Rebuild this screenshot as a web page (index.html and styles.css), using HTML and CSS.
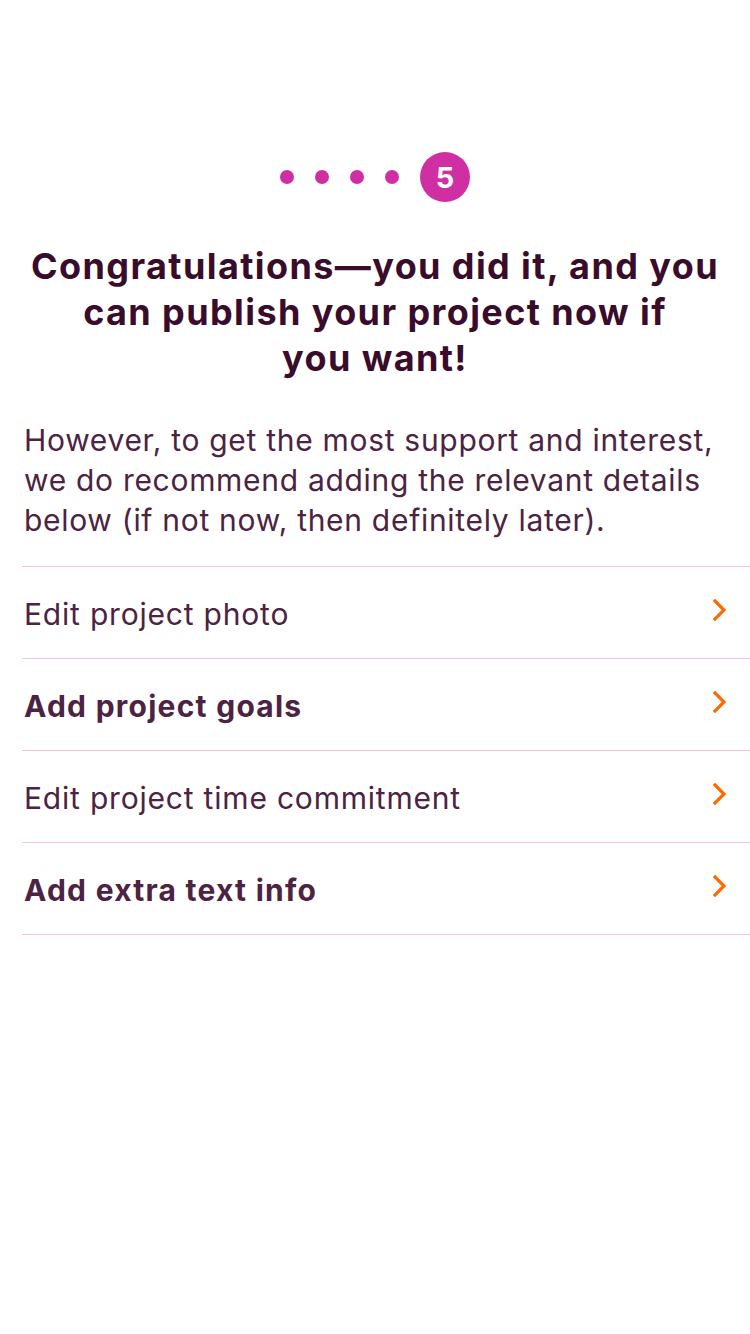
FILE: index.html
```html
<!DOCTYPE html>
<html>
<head>
<meta charset="utf-8">
<link rel="stylesheet" href="styles.css">
</head>
<body>
<div class="page">
  <div class="steps">
    <span class="dot"></span>
    <span class="dot"></span>
    <span class="dot"></span>
    <span class="dot"></span>
    <span class="current">5</span>
  </div>
  <h1 class="title">Congratulations—you did it, and you can publish your project now if<br>you want!</h1>
  <p class="intro">However, to get the most support and interest, we do recommend adding the relevant details below (if not now, then definitely later).</p>
  <ul class="list">
    <li class="item"><span class="label">Edit project photo</span><svg class="chev" viewBox="0 0 16 24" width="16" height="24"><path d="M3 3 L12 12 L3 21" fill="none" stroke="#ff6a00" stroke-width="3.2" stroke-linecap="square"/></svg></li>
    <li class="item"><span class="label bold">Add project goals</span><svg class="chev" viewBox="0 0 16 24" width="16" height="24"><path d="M3 3 L12 12 L3 21" fill="none" stroke="#ff6a00" stroke-width="3.2" stroke-linecap="square"/></svg></li>
    <li class="item"><span class="label">Edit project time commitment</span><svg class="chev" viewBox="0 0 16 24" width="16" height="24"><path d="M3 3 L12 12 L3 21" fill="none" stroke="#ff6a00" stroke-width="3.2" stroke-linecap="square"/></svg></li>
    <li class="item"><span class="label bold">Add extra text info</span><svg class="chev" viewBox="0 0 16 24" width="16" height="24"><path d="M3 3 L12 12 L3 21" fill="none" stroke="#ff6a00" stroke-width="3.2" stroke-linecap="square"/></svg></li>
  </ul>
</div>
</body>
</html>
```
FILE: styles.css
```css
html, body {
  margin: 0;
  padding: 0;
  background: #fff;
}
.page {
  font-family: Inter, "Noto Sans", sans-serif;
  padding-top: 152px;
}
.steps {
  display: flex;
  justify-content: center;
  align-items: center;
  gap: 21px;
  height: 50px;
}
.dot {
  width: 14px;
  height: 14px;
  border-radius: 50%;
  background: #d02fa3;
}
.current {
  width: 50px;
  height: 50px;
  border-radius: 50%;
  background: #d02fa3;
  color: #fff;
  font-weight: 700;
  font-size: 29px;
  display: flex;
  align-items: center;
  justify-content: center;
}
.title {
  margin: 41px 0 0;
  padding: 0 20px;
  text-align: center;
  font-size: 36px;
  line-height: 46px;
  font-weight: 700;
  color: #3a0c2b;
  letter-spacing: 1.4px;
}
.intro {
  margin: 39px 0 0;
  padding: 0 24px;
  font-size: 30px;
  line-height: 40px;
  font-weight: 400;
  color: #4c2343;
  letter-spacing: 0.7px;
}
.list {
  list-style: none;
  margin: 26px 0 0 22px;
  padding: 0;
  border-top: 1px solid #efc1e3;
}
.item {
  display: flex;
  align-items: center;
  justify-content: space-between;
  height: 91px;
  border-bottom: 1px solid #efc1e3;
  padding: 0 22px 0 2px;
}
.label {
  font-size: 30px;
  color: #4c2343;
  font-weight: 400;
  letter-spacing: 0.8px;
  padding-top: 2px;
}
.label.bold {
  font-weight: 700;
  letter-spacing: 1.25px;
}
.chev {
  display: block;
  margin-top: -6px;
}
```
